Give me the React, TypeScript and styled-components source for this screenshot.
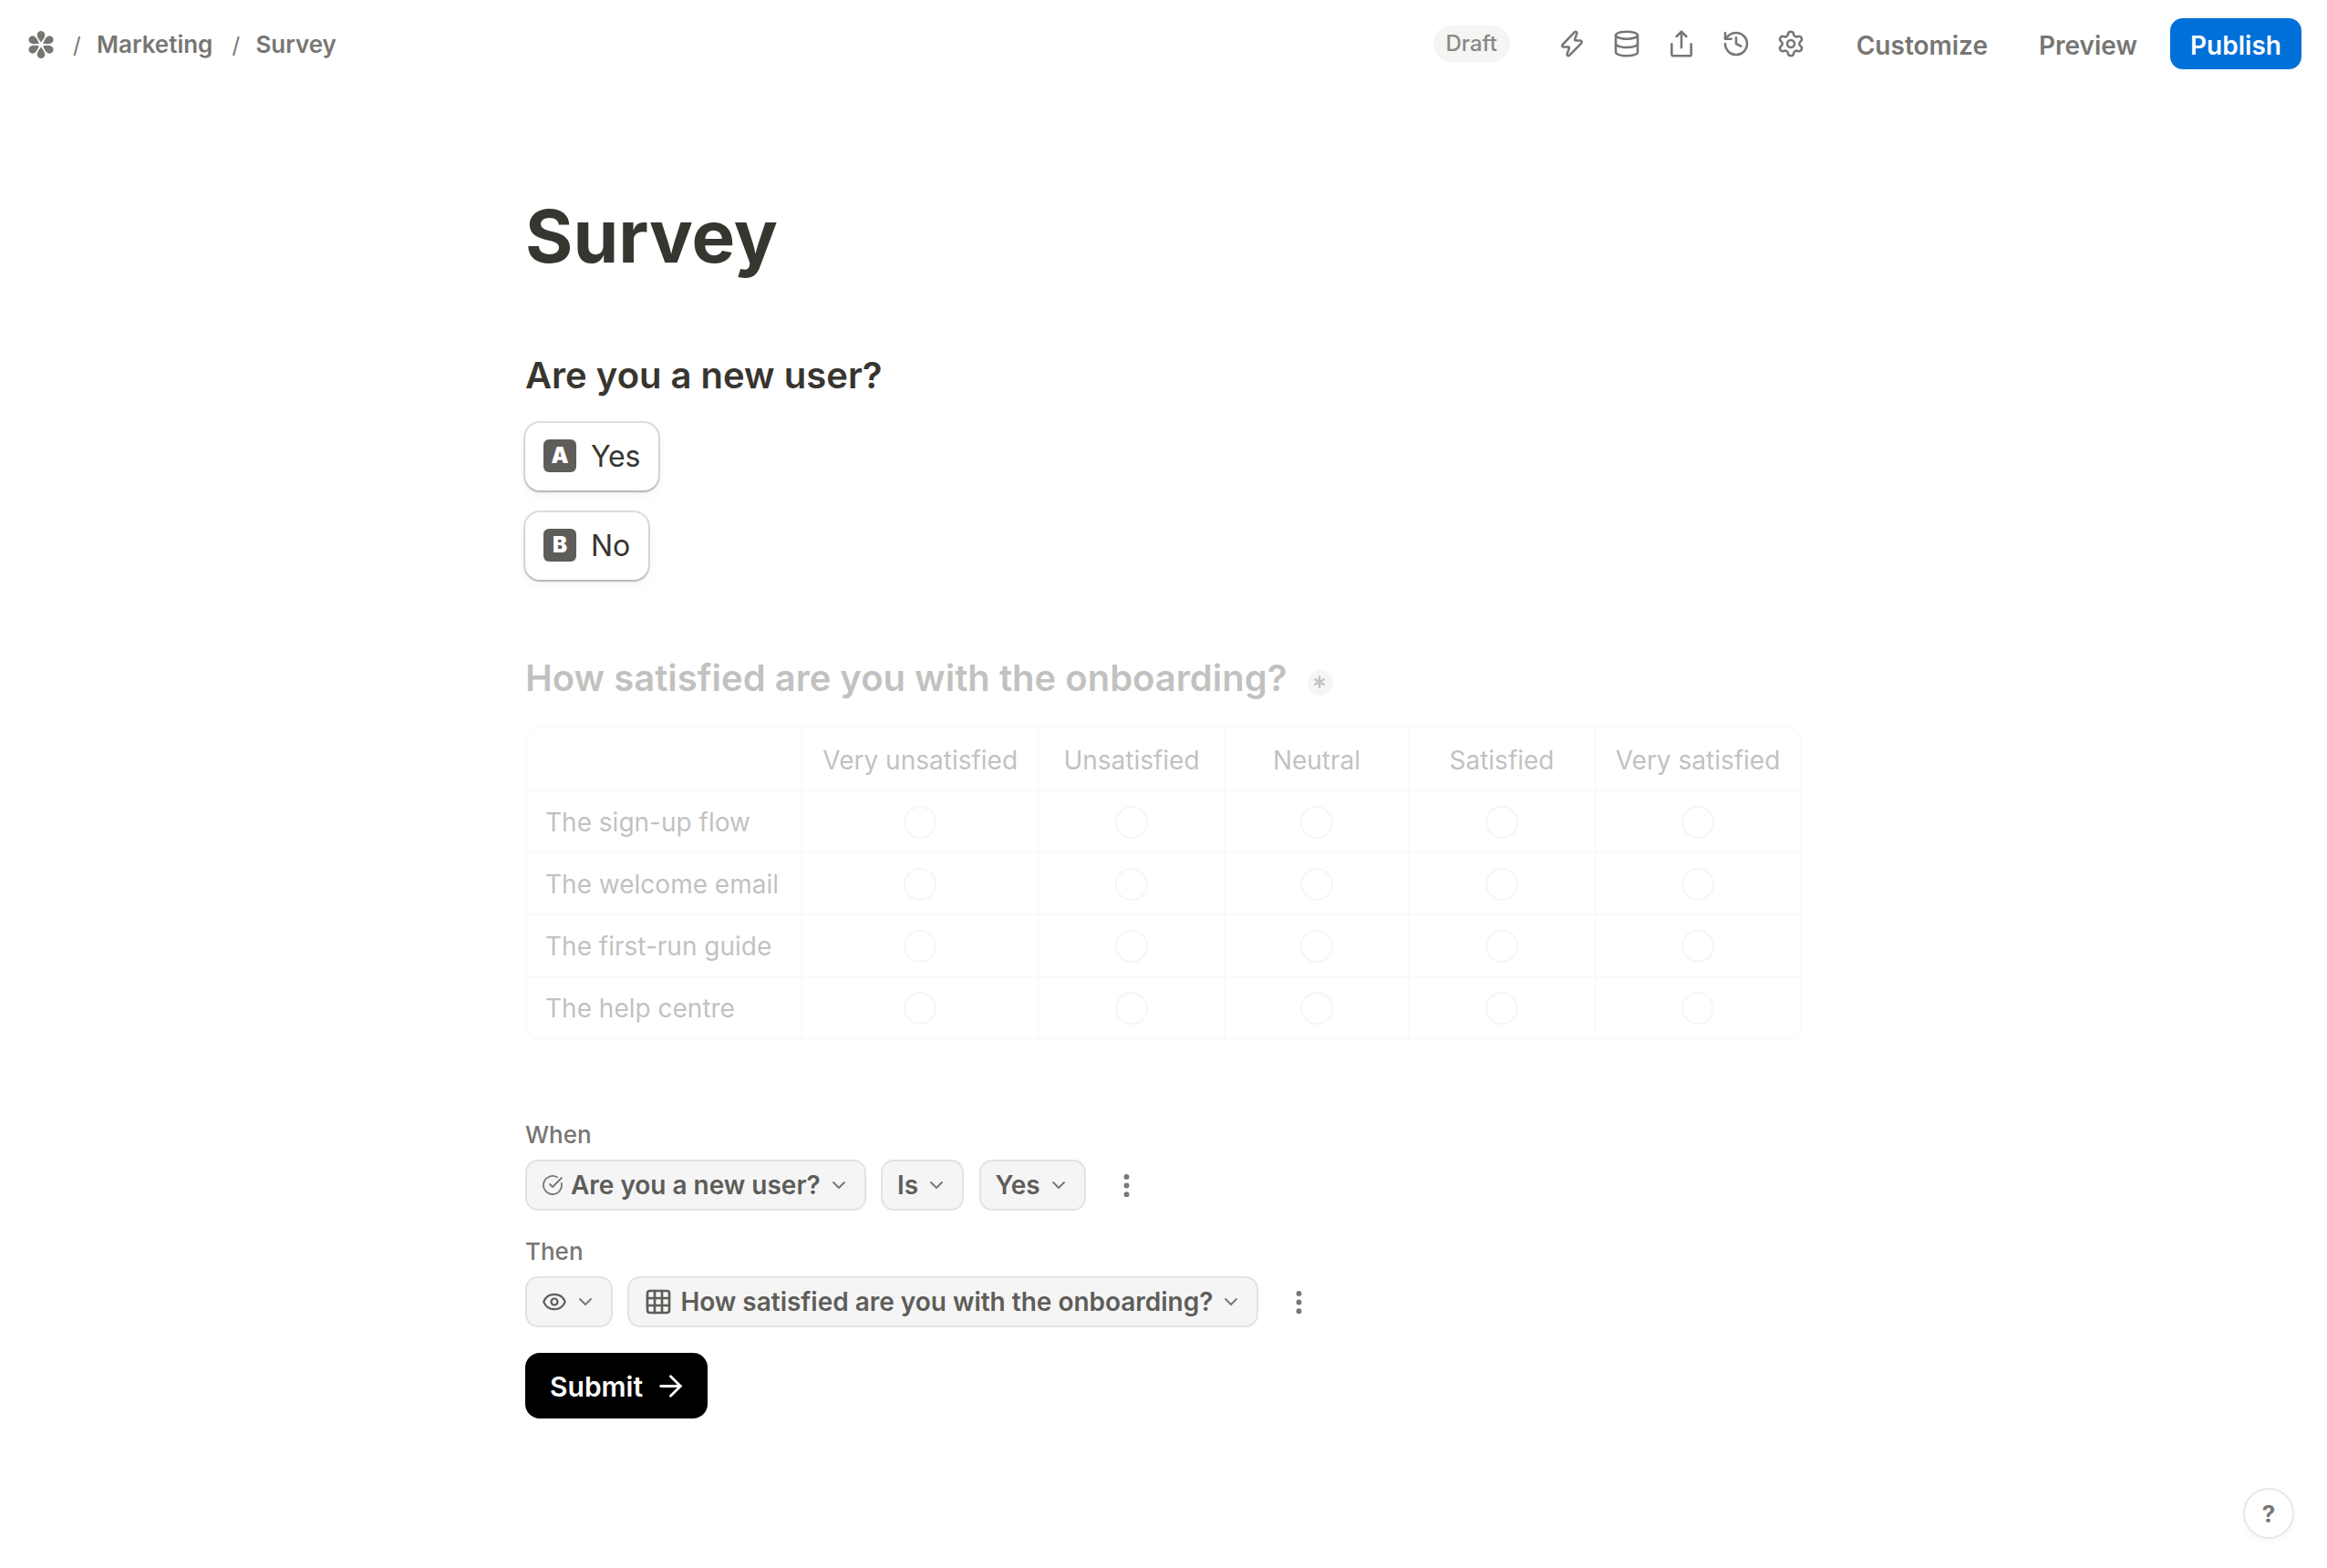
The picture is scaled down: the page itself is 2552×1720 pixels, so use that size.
import React from "react";
import styled, { createGlobalStyle } from "styled-components";
import {
  ArrowRight,
  Asterisk,
  ChevronDown,
  CircleCheckBig,
  Database,
  EllipsisVertical,
  Eye,
  Grid3x3,
  History,
  Settings,
} from "lucide-react";

const GlobalStyle = createGlobalStyle`
  *, *::before, *::after { box-sizing: border-box; }
  body { margin: 0; background: #ffffff; }
`;

const ink = "#37352f";
const soft = "#5e5d59";
const muted = "#777673";
const line = "#f1f1f0";

const Page = styled.div`
  position: relative;
  width: 2552px;
  height: 1720px;
  display: flex;
  flex-direction: column;
  overflow: hidden;
  font-family: Inter, "Liberation Sans", sans-serif;
  color: ${ink};
`;

const TopBar = styled.header`
  height: 96px;
  flex: none;
  display: flex;
  align-items: center;
  justify-content: space-between;
  padding: 0 28px 0 30px;
  color: ${muted};
`;

const Crumbs = styled.nav`
  display: flex;
  align-items: center;
`;

const Logo = styled.svg`
  width: 30px;
  height: 30px;
  margin: 2px 20px 0 0;
  fill: currentColor;
`;

const Slash = styled.span`
  width: 26px;
  margin-top: 3px;
  font-size: 24px;
  line-height: 40px;
`;

const Crumb = styled.span`
  margin: 1px 21px 0 0;
  font-size: 26px;
  line-height: 40px;
  font-weight: 600;
`;

const Actions = styled.div`
  display: flex;
  align-items: center;
`;

const Draft = styled.span`
  width: 84px;
  height: 40px;
  padding-bottom: 1px;
  border-radius: 20px;
  background: #f5f5f4;
  color: #898884;
  font-size: 24px;
  font-weight: 500;
  line-height: 39px;
  text-align: center;
`;

const IconGroup = styled.div`
  display: flex;
  gap: 28px;
  margin: 0 56px 0 52px;
`;

const LineIcon = styled.svg`
  width: 32px;
  height: 32px;
  fill: none;
  stroke: currentColor;
  stroke-width: 1.9;
  stroke-linecap: round;
  stroke-linejoin: round;
`;

const TextButton = styled.button<{ $gap: number }>`
  border: 0;
  padding: 0;
  background: none;
  margin: 4px ${(p) => p.$gap}px 0 0;
  font: 600 28px/40px Inter, sans-serif;
  color: ${muted};
`;

const Publish = styled.button`
  width: 144px;
  height: 56px;
  border: 0;
  padding: 4px 0 0;
  border-radius: 14px;
  background: #0070d9;
  color: #fff;
  font: 600 28px/40px Inter, sans-serif;
`;

const Form = styled.main`
  width: 1400px;
  margin: 0 auto;
  padding-top: 111px;
  flex: 1;
`;

const Title = styled.h1`
  margin: 0;
  font-size: 80px;
  line-height: 104px;
  font-weight: 700;
`;

const Question = styled.h2<{ $top: number }>`
  margin: ${(p) => p.$top}px 0 0;
  display: flex;
  align-items: center;
  font-size: 40px;
  line-height: 51px;
  font-weight: 600;
`;

const Options = styled.div`
  margin-top: 27px;
  display: flex;
  flex-direction: column;
  align-items: flex-start;
  gap: 24px;
`;

const Option = styled.div`
  height: 74px;
  display: flex;
  align-items: center;
  padding: 0 20px 1px 20px;
  border-radius: 16px;
  background: #fff;
  box-shadow: 0 0 0 2px rgba(61, 59, 59, 0.16), 0 2px 2px 0 rgba(61, 59, 59, 0.22),
    0 4px 12px 0 rgba(61, 59, 59, 0.06);
  font-size: 32px;
  line-height: 39px;
  letter-spacing: -0.2px;
`;

const OptionKey = styled.span`
  width: 36px;
  height: 36px;
  margin: 0 16px 1px 0;
  padding-bottom: 1px;
  display: flex;
  align-items: center;
  justify-content: center;
  border-radius: 6px;
  background: ${soft};
  color: #fff;
  font-size: 24px;
  font-weight: 900;
  line-height: 35px;
`;

const Faded = styled.section`
  opacity: 0.3;
`;

const Required = styled.span`
  width: 28px;
  height: 28px;
  margin: 10px 0 0 22px;
  padding: 0 2px 2px 0;
  display: flex;
  align-items: center;
  justify-content: center;
  border-radius: 50%;
  background: #e2e2e1;
`;

const Matrix = styled.div`
  margin-top: 27px;
  display: grid;
  grid-template-columns: 302.4px 259.6px 204px 202px 204px 224px;
  border: 2px solid ${line};
  border-radius: 16px;
  font-size: 28px;
  line-height: 40px;
`;

const Cell = styled.div<{ $head?: boolean; $label?: boolean; $last?: boolean; $bottom?: boolean }>`
  height: ${(p) => (p.$head ? 70 : p.$bottom ? 66 : 68)}px;
  display: flex;
  align-items: center;
  justify-content: ${(p) => (p.$label ? "flex-start" : "center")};
  padding: ${(p) => (p.$head ? 4 : 2)}px 0 0 ${(p) => (p.$label ? 20 : 0)}px;
  border: 0 solid ${line};
  border-right-width: ${(p) => (p.$last ? 0 : 2)}px;
  border-bottom-width: ${(p) => (p.$bottom ? 0 : 2)}px;
`;

const Radio = styled.span`
  width: 36px;
  height: 36px;
  border-radius: 50%;
  border: 2px solid #e2e2e1;
`;

const LogicLabel = styled.div<{ $top: number }>`
  margin-top: ${(p) => p.$top}px;
  font-size: 26px;
  font-weight: 500;
  line-height: 35px;
  color: ${muted};
`;

const LogicRow = styled.div`
  margin-top: 10px;
  display: flex;
  align-items: center;
  gap: 16.4px;
`;

const Chip = styled.div`
  height: 56px;
  display: flex;
  align-items: center;
  gap: 8px;
  padding: 0 16px;
  border: 2px solid #e3e3e2;
  border-radius: 14px;
  background: #f5f5f5;
  color: ${soft};
  font-size: 28px;
  line-height: 34px;
  letter-spacing: -0.02px;
  font-weight: 600;
  white-space: nowrap;
`;

const More = styled(EllipsisVertical)`
  margin: 1px 0 0 11.5px;
  color: ${muted};
`;

const Submit = styled.button`
  width: 200px;
  height: 72px;
  margin-top: 28px;
  padding: 0 0 0 27px;
  border: 0;
  border-radius: 16px;
  display: flex;
  align-items: center;
  gap: 12px;
  background: #000;
  color: #fff;
  font: 600 30px/36px Inter, sans-serif;
`;

const SubmitText = styled.span`
  padding-top: 2px;
`;

const Help = styled.button`
  position: absolute;
  right: 36px;
  bottom: 32px;
  width: 56px;
  height: 56px;
  padding: 1px 0 0;
  border: 2px solid #e8e8e7;
  border-radius: 50%;
  background: #fff;
  box-shadow: 0 4px 8px rgba(0, 0, 0, 0.03);
  color: ${muted};
  font: 700 26px/31px Inter, sans-serif;
`;

const FlowerLogo = () => (
  <Logo viewBox="-15 -15 30 30">
    {[0, 60, 120, 180, 240, 300].map((a) => (
      <path
        key={a}
        transform={`rotate(${a})`}
        d="M0-2.4C-1.4-4.6-4.3-7.4-4.3-10.7A4.3 4.3 0 0 1 4.3-10.7C4.3-7.4 1.4-4.6 0-2.4Z"
      />
    ))}
  </Logo>
);

const BoltIcon = () => (
  <LineIcon viewBox="0 0 24 24">
    <path d="M4.3 12.6 14 2.5c.9-.9 2.3-.2 2 1l-1.7 5.1c-.1.4.1.7.5.7h3.9c1.2 0 1.8 1.4 1 2.2L10 21.5c-.9.9-2.3.2-2-1l1.7-5.1c.1-.4-.1-.7-.5-.7H5.3c-1.2 0-1.8-1.3-1-2.1z" />
  </LineIcon>
);

const ShareIcon = () => (
  <LineIcon viewBox="0 0 24 24">
    <path d="M12 2v13.2M16 6l-4-4-4 4M4 12.2v8.6A1.2 1.2 0 0 0 5.200 22h13.600a1.200 1.200 0 0 0 1.200-1.200v-8.600" />
  </LineIcon>
);

const Chevron = () => <ChevronDown size={24} strokeWidth={1.9} color={muted} />;

const columns = ["", "Very unsatisfied", "Unsatisfied", "Neutral", "Satisfied", "Very satisfied"];
const rows = ["The sign-up flow", "The welcome email", "The first-run guide", "The help centre"];

export default function App() {
  return (
    <Page>
      <GlobalStyle />
      <TopBar>
        <Crumbs>
          <FlowerLogo />
          <Slash>/</Slash>
          <Crumb>Marketing</Crumb>
          <Slash>/</Slash>
          <Crumb>Survey</Crumb>
        </Crumbs>
        <Actions>
          <Draft>Draft</Draft>
          <IconGroup>
            <BoltIcon />
            <Database size={32} strokeWidth={1.9} />
            <ShareIcon />
            <History size={32} strokeWidth={1.9} />
            <Settings size={32} strokeWidth={1.9} />
          </IconGroup>
          <TextButton $gap={56}>Customize</TextButton>
          <TextButton $gap={36}>Preview</TextButton>
          <Publish>Publish</Publish>
        </Actions>
      </TopBar>
      <Form>
        <Title>Survey</Title>
        <Question $top={75}>Are you a new user?</Question>
        <Options>
          <Option>
            <OptionKey>A</OptionKey>
            Yes
          </Option>
          <Option>
            <OptionKey>B</OptionKey>
            No
          </Option>
        </Options>
        <Faded>
          <Question $top={82}>
            How satisfied are you with the onboarding?
            <Required>
              <Asterisk size={22} strokeWidth={2.7} />
            </Required>
          </Question>
          <Matrix>
            {columns.map((name, i) => (
              <Cell key={i} $head $last={i === 5}>
                {name}
              </Cell>
            ))}
            {rows.map((row, r) =>
              columns.map((_, i) => (
                <Cell key={row + i} $label={i === 0} $last={i === 5} $bottom={r === rows.length - 1}>
                  {i === 0 ? row : <Radio />}
                </Cell>
              ))
            )}
          </Matrix>
        </Faded>
        <LogicLabel $top={87}>When</LogicLabel>
        <LogicRow>
          <Chip>
            <CircleCheckBig size={24} strokeWidth={1.8} color={muted} />
            Are you a new user?
            <Chevron />
          </Chip>
          <Chip>
            Is
            <Chevron />
          </Chip>
          <Chip>
            Yes
            <Chevron />
          </Chip>
          <More size={33} strokeWidth={2.3} />
        </LogicRow>
        <LogicLabel $top={27}>Then</LogicLabel>
        <LogicRow>
          <Chip>
            <Eye size={28} strokeWidth={1.9} />
            <Chevron />
          </Chip>
          <Chip>
            <Grid3x3 size={32} strokeWidth={2} />
            How satisfied are you with the onboarding?
            <Chevron />
          </Chip>
          <More size={33} strokeWidth={2.3} />
        </LogicRow>
        <Submit>
          <SubmitText>Submit</SubmitText>
          <ArrowRight size={37} strokeWidth={1.8} />
        </Submit>
      </Form>
      <Help>?</Help>
    </Page>
  );
}
